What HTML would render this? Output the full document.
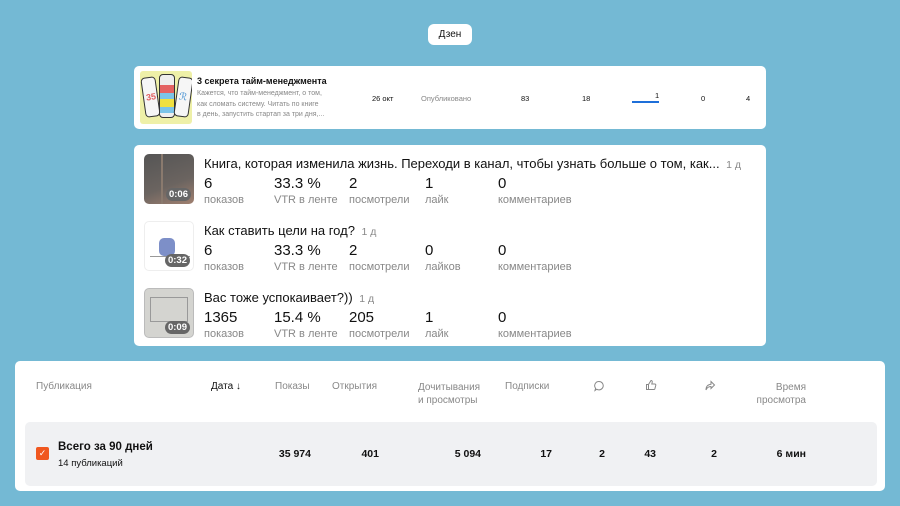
<!DOCTYPE html>
<html><head><meta charset="utf-8"><style>
*{margin:0;padding:0;box-sizing:border-box}
body{width:900px;height:506px;background:#74b9d4;font-family:"Liberation Sans",sans-serif;position:relative;overflow:hidden;color:#111}
.abs{position:absolute;white-space:nowrap}
.card{position:absolute;background:#fff;border-radius:5px}
.g{color:#888}
.n{font-size:15px;line-height:15px}
.n span{font-size:11px;line-height:16px;color:#888}
</style></head><body>
<div class="card" style="left:428px;top:24px;width:44px;height:21px;border-radius:6px;font-size:10px;text-align:center;line-height:21px">Дзен</div>

<div class="card" style="left:134px;top:66px;width:632px;height:63px">
 <div class="abs" style="left:6px;top:5px;width:52px;height:53px;background:#eef0a8;border-radius:3px;overflow:hidden">
  <div class="abs" style="left:3px;top:6px;width:15px;height:40px;background:#f6f6f6;border:1px solid #333;border-radius:4px;transform:rotate(-8deg)"><div style="color:#e06060;font-size:9px;font-weight:bold;margin:14px 0 0 2px">35</div></div>
  <div class="abs" style="left:19px;top:3px;width:16px;height:44px;background:#eee;border:1px solid #333;border-radius:4px"><div style="height:8px;background:#e46262;margin-top:10px"></div><div style="height:6px;background:#7cc4e8"></div><div style="height:8px;background:#f0e040"></div><div style="height:6px;background:#7cc4e8"></div></div>
  <div class="abs" style="left:36px;top:6px;width:15px;height:40px;background:#f6f6f6;border:1px solid #333;border-radius:4px;transform:rotate(8deg)"><div style="color:#3a8ad0;font-size:10px;margin:14px 0 0 2px">ℛ</div></div>
 </div>
 <div class="abs" style="left:63px;top:10px;font-size:9px;font-weight:bold">3 секрета тайм-менеджмента</div>
 <div class="abs g" style="left:63px;top:23px;font-size:7px;line-height:10.5px">Кажется, что тайм-менеджмент, о том,<br>как сломать систему. Читать по книге<br>в день, запустить стартап за три дня,...</div>
 <div class="abs" style="left:238px;top:28px;font-size:7.5px">26 окт</div>
 <div class="abs g" style="left:287px;top:28px;font-size:7.5px">Опубликовано</div>
 <div class="abs" style="left:387px;top:28px;font-size:7.5px">83</div>
 <div class="abs" style="left:448px;top:28px;font-size:7.5px">18</div>
 <div class="abs" style="left:521px;top:25px;font-size:7.5px">1</div>
 <div class="abs" style="left:498px;top:35px;width:27px;height:2px;background:#1e6fd9"></div>
 <div class="abs" style="left:567px;top:28px;font-size:7.5px">0</div>
 <div class="abs" style="left:612px;top:28px;font-size:7.5px">4</div>
</div>

<div class="card" style="left:134px;top:145px;width:632px;height:201px">
 <div class="abs" style="left:10px;top:9px;width:50px;height:50px;border-radius:5px;background:linear-gradient(160deg,#555 0%,#6b6460 60%,#a08070 100%)"><div style="position:absolute;left:17px;top:0;width:2px;height:50px;background:#8a7a6e"></div><div style="position:absolute;right:3px;bottom:3px;background:#666;color:#fff;font-size:9.5px;font-weight:bold;padding:1px 3px;border-radius:7px">0:06</div></div>
 <div class="abs" style="left:10px;top:76px;width:50px;height:50px;border-radius:5px;background:#fff;border:1px solid #eee"><div style="position:absolute;left:14px;top:16px;width:16px;height:18px;background:#7d8fc8;border-radius:5px"></div><div style="position:absolute;left:5px;top:34px;width:40px;height:1px;background:#999"></div><div style="position:absolute;right:3px;bottom:3px;background:#666;color:#fff;font-size:9.5px;font-weight:bold;padding:1px 3px;border-radius:7px">0:32</div></div>
 <div class="abs" style="left:10px;top:143px;width:50px;height:50px;border-radius:5px;background:#d4d4d0;border:1px solid #bbb"><div style="position:absolute;left:5px;top:8px;width:38px;height:25px;border:1px solid #999"></div><div style="position:absolute;right:3px;bottom:3px;background:#666;color:#fff;font-size:9.5px;font-weight:bold;padding:1px 3px;border-radius:7px">0:09</div></div>

 <div class="abs" style="left:70px;top:11px;font-size:13px">Книга, которая изменила жизнь. Переходи в канал, чтобы узнать больше о том, как... <span class="g" style="font-size:10.5px">&nbsp;1 д</span></div>
 <div class="abs" style="left:70px;top:78px;font-size:13px">Как ставить цели на год? <span class="g" style="font-size:10.5px">&nbsp;1 д</span></div>
 <div class="abs" style="left:70px;top:145px;font-size:13px">Вас тоже успокаивает?)) <span class="g" style="font-size:10.5px">&nbsp;1 д</span></div>

 <div class="abs n" style="left:70px;top:31px">6<br><span>показов</span></div>
 <div class="abs n" style="left:140px;top:31px">33.3 %<br><span>VTR в ленте</span></div>
 <div class="abs n" style="left:215px;top:31px">2<br><span>посмотрели</span></div>
 <div class="abs n" style="left:291px;top:31px">1<br><span>лайк</span></div>
 <div class="abs n" style="left:364px;top:31px">0<br><span>комментариев</span></div>

 <div class="abs n" style="left:70px;top:98px">6<br><span>показов</span></div>
 <div class="abs n" style="left:140px;top:98px">33.3 %<br><span>VTR в ленте</span></div>
 <div class="abs n" style="left:215px;top:98px">2<br><span>посмотрели</span></div>
 <div class="abs n" style="left:291px;top:98px">0<br><span>лайков</span></div>
 <div class="abs n" style="left:364px;top:98px">0<br><span>комментариев</span></div>

 <div class="abs n" style="left:70px;top:165px">1365<br><span>показов</span></div>
 <div class="abs n" style="left:140px;top:165px">15.4 %<br><span>VTR в ленте</span></div>
 <div class="abs n" style="left:215px;top:165px">205<br><span>посмотрели</span></div>
 <div class="abs n" style="left:291px;top:165px">1<br><span>лайк</span></div>
 <div class="abs n" style="left:364px;top:165px">0<br><span>комментариев</span></div>
</div>

<div class="card" style="left:15px;top:361px;width:870px;height:130px">
 <div class="abs g" style="left:21px;top:20px;font-size:10px">Публикация</div>
 <div class="abs" style="left:196px;top:20px;font-size:10px">Дата ↓</div>
 <div class="abs g" style="left:260px;top:20px;font-size:10px">Показы</div>
 <div class="abs g" style="left:317px;top:20px;font-size:10px">Открытия</div>
 <div class="abs g" style="left:403px;top:20px;font-size:10px;line-height:13px">Дочитывания<br>и просмотры</div>
 <div class="abs g" style="left:490px;top:20px;font-size:10px">Подписки</div>
 <svg class="abs" style="left:578px;top:19px" width="12" height="12" viewBox="0 0 12 12" fill="none" stroke="#888" stroke-width="1"><path d="M6 1.5a4.2 4.2 0 1 1-2.3 7.7L2 10.5l.6-2.2A4.2 4.2 0 0 1 6 1.5z"/></svg>
 <svg class="abs" style="left:630px;top:18px" width="12" height="12" viewBox="0 0 12 12" fill="none" stroke="#888" stroke-width="1"><path d="M1.5 5.5h2v5h-2zM3.5 5.5l2.5-4c1 0 1.5.7 1.2 1.8L6.8 5h3a1 1 0 0 1 1 1.2l-.9 3.6a1 1 0 0 1-1 .7H3.5"/></svg>
 <svg class="abs" style="left:689px;top:19px" width="12" height="12" viewBox="0 0 12 12" fill="none" stroke="#888" stroke-width="1"><path d="M7 1.5l3.5 3.5L7 8.5V6.5C4.5 6.5 3 7.5 2 10c0-3.5 1.8-5.5 5-5.8z"/></svg>
 <div class="abs g" style="left:740px;top:20px;width:51px;font-size:10px;line-height:13px;text-align:right">Время<br>просмотра</div>
 <div class="abs" style="left:10px;top:61px;width:852px;height:64px;background:#f0f1f3;border-radius:5px">
  <div class="abs" style="left:11px;top:25px;width:13px;height:13px;background:#f0571f;border-radius:2px;color:#fff;font-size:9px;text-align:center;line-height:13px">✓</div>
  <div class="abs" style="left:33px;top:19px;font-size:11.5px;font-weight:bold">Всего за 90 дней</div>
  <div class="abs" style="left:33px;top:36px;font-size:9.5px">14 публикаций</div>
  <div class="abs" style="left:226px;top:26px;width:60px;text-align:right;font-size:10.5px;font-weight:bold">35 974</div>
  <div class="abs" style="left:294px;top:26px;width:60px;text-align:right;font-size:10.5px;font-weight:bold">401</div>
  <div class="abs" style="left:396px;top:26px;width:60px;text-align:right;font-size:10.5px;font-weight:bold">5 094</div>
  <div class="abs" style="left:467px;top:26px;width:60px;text-align:right;font-size:10.5px;font-weight:bold">17</div>
  <div class="abs" style="left:520px;top:26px;width:60px;text-align:right;font-size:10.5px;font-weight:bold">2</div>
  <div class="abs" style="left:571px;top:26px;width:60px;text-align:right;font-size:10.5px;font-weight:bold">43</div>
  <div class="abs" style="left:632px;top:26px;width:60px;text-align:right;font-size:10.5px;font-weight:bold">2</div>
  <div class="abs" style="left:721px;top:26px;width:60px;text-align:right;font-size:10.5px;font-weight:bold">6 мин</div>
 </div>
</div>
</body></html>
